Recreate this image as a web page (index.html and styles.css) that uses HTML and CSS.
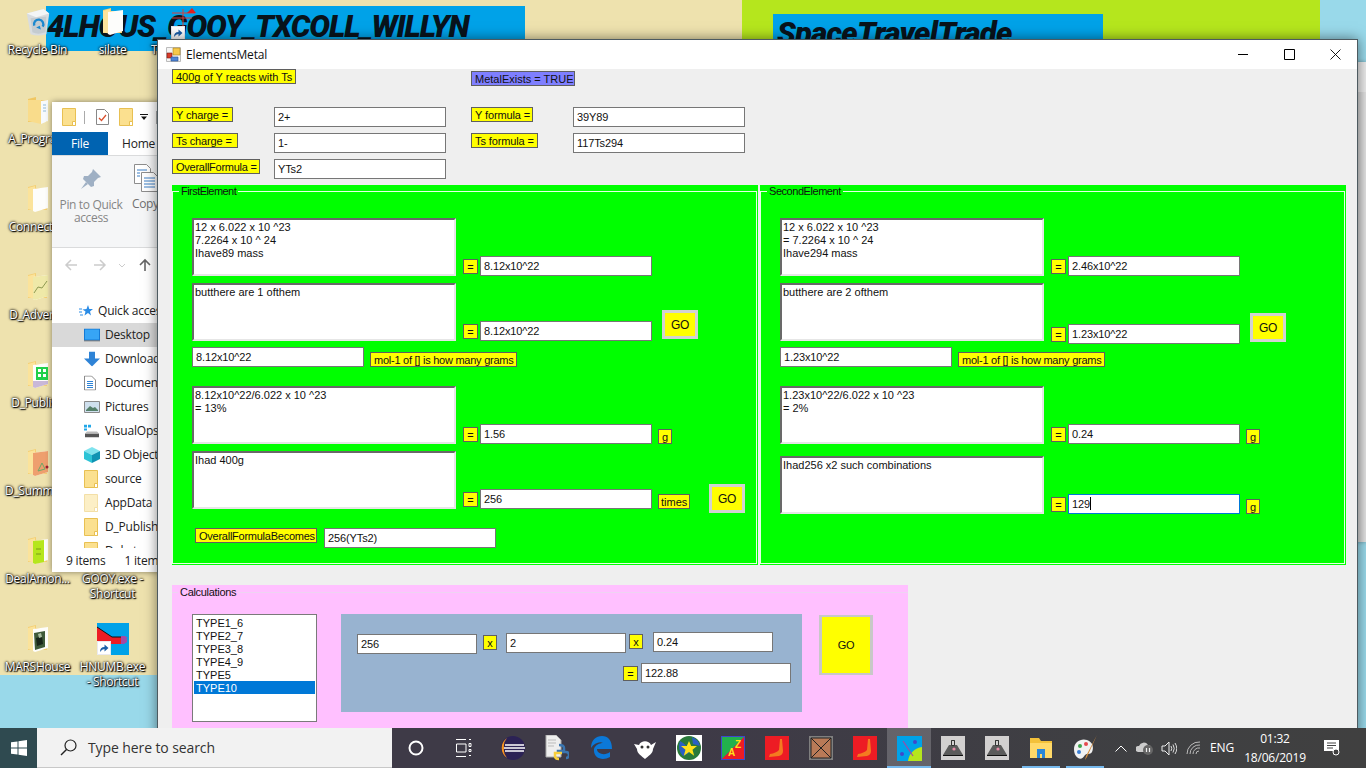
FILE: index.html
```html
<!DOCTYPE html>
<html lang="en">
<head>
<meta charset="utf-8">
<title>ElementsMetal</title>
<link rel="stylesheet" href="styles.css">
</head>
<body>
<svg class="defs" width="0" height="0" aria-hidden="true">
  <symbol id="dfolder" viewBox="0 0 22 28">
    <path d="M1 2 L9 0 L9 3 L20 3 L20 25 L1 25 Z" fill="#f4cf73"/>
    <path d="M1 3 L8 1 L8 26 L1 24 Z" fill="#fbe39b"/>
    <path d="M6 4 L21 2 L21 23 L8 27 L6 26 Z" fill="#fdfdfb"/>
  </symbol>
  <symbol id="dfolder2" viewBox="0 0 22 28">
    <path d="M1 2 L9 0 L9 3 L20 3 L20 25 L1 25 Z" fill="#f0c763"/>
    <path d="M1 3 L14 3 L14 27 L1 24 Z" fill="#f9dc8b"/>
    <path d="M14 4 L21 3 L21 24 L14 27 Z" fill="#f7fafc"/>
    <path d="M16 8h3M16 11h3M16 14h3" stroke="#8fb9d8"/>
  </symbol>
  <symbol id="sfolder" viewBox="0 0 14 18">
    <path d="M.5.5h13v17H.5z" fill="#fbe08f" stroke="#e8c052"/>
    <path d="M10.5 13.5h3v4h-3z" fill="#fff" stroke="#e8c052"/>
  </symbol>
  <symbol id="mount" viewBox="0 0 24 24">
    <path d="M0 0h24v24H0z" fill="#d2d0d0"/>
    <path d="M2 19 L8 9 L10 9 L10 4 L14 4 L14 9 L16 9 L22 19 Z" fill="#5b5b5b"/>
    <path d="M10.500 4.500h3v5h-3z" fill="#d2d0d0" stroke="#333"/>
    <path d="M2 19h20v1H2z" fill="#111"/>
    <circle cx="13" cy="13" r="1.600" fill="#e58aa8"/>
  </symbol>
  <symbol id="boot" viewBox="0 0 24 24">
    <path d="M0 0h24v24H0z" fill="#ed1c24"/>
    <path d="M15 3h2l1 12q0 4-4 5L4 21l1-3q6-1 9-4z" fill="#f47a20"/>
  </symbol>
  <symbol id="arrow" viewBox="0 0 14 14">
    <path d="M0 0h14v14H0z" fill="#e9e9ef"/>
    <path d="M1 13V1h12v12z" fill="#fff"/>
    <path d="M3 11 Q3 6 7.500 6 V3.500 L11.500 7 L7.500 10.500 V8 Q5 8 3 11Z" fill="#1c5fa8"/>
  </symbol>
</svg>

<div class="bg bg-tan"></div>
<div class="bg bg-blue-r"></div>
<div class="bg bg-blue-l"></div>
<div class="bg bg-banner1"><span class="banner-text">4LHOUS_GOOY_TXCOLL_WILLYN</span></div>
<div class="bg bg-lime"></div>
<div class="bg bg-banner2"><span class="banner-text banner-text2">SpaceTravelTrade</span></div>
<div class="bg bg-behind"><div class="behind-top"></div></div>

<div class="dicon c1 r0">
  <svg class="di" width="28" height="30" viewBox="0 0 28 30"><path d="M2 6 L20 1 L26 6 L23 28 Q14 31 6 28Z" fill="#d8dcdf"/><path d="M2 6 L20 1 L26 6 L12 10Z" fill="#f3f5f6"/><path d="M6 11 L23 9 L22 26 Q14 29 8 26Z" fill="#c4cbd0"/><path d="M10 19 a5 5 0 1 1 9 1" fill="none" stroke="#1b88cf" stroke-width="2.500"/><path d="M12 21 l5 2 -1-4z" fill="#1b88cf"/></svg>
  <span class="dl">Recycle Bin</span>
</div>
<div class="dicon c2 r0">
  <svg class="di" width="22" height="28"><use href="#dfolder"/></svg>
  <span class="dl">silate</span>
</div>
<svg class="tee-icon" width="26" height="32" viewBox="0 0 26 32"><path d="M1 5h23M1 10h20M12 1v18" stroke="#d5403f" stroke-width="1" fill="none"/><path d="M16 5 L21 0 L25 5Z" fill="#e0201f"/><use href="#arrow" x="0" y="18" width="14" height="14"/></svg>
<span class="dl dl-t">T</span>
<div class="dicon c1 r1">
  <svg class="di" width="22" height="28"><use href="#dfolder2"/></svg>
  <span class="dl">A_Program</span>
</div>
<div class="dicon c1 r2">
  <svg class="di" width="22" height="28"><use href="#dfolder"/></svg>
  <span class="dl">Connected</span>
</div>
<div class="dicon c1 r3">
  <svg class="di" width="22" height="28" viewBox="0 0 22 28"><use href="#dfolder" width="22" height="28"/><path d="M6 4 L21 2 V23 L8 27 L6 26Z" fill="#efe9a8"/><path d="M7 20 L11 14 L15 15 L20 8" fill="none" stroke="#8f9a52"/></svg>
  <span class="dl">D_Advertis</span>
</div>
<div class="dicon c1 r4">
  <svg class="di" width="22" height="28" viewBox="0 0 22 28"><use href="#dfolder" width="22" height="28"/><path d="M9 6h12v13H9z" fill="#21d04a"/><path d="M11 8h3v3h-3zm5 0h3v3h-3zm-5 5h3v3h-3zm5 0h3v3h-3z" fill="#fff"/><path d="M6 20h15v3l-13 4-2-1z" fill="#c9b8d8"/></svg>
  <span class="dl">D_Publish</span>
</div>
<div class="dicon c1 r5">
  <svg class="di" width="22" height="28" viewBox="0 0 22 28"><use href="#dfolder" width="22" height="28"/><path d="M6 4 L21 2 V23 L8 27 L6 26Z" fill="#ee9f6e"/><path d="M11 22 L15 14 L18 20 Z" fill="none" stroke="#6fa866"/><circle cx="20" cy="18" r="1.500" fill="#a01c2c"/></svg>
  <span class="dl">D_Summary</span>
</div>
<div class="dicon c1 r6">
  <svg class="di" width="22" height="28" viewBox="0 0 22 28"><use href="#dfolder" width="22" height="28"/><path d="M6 4 L17 3 V25 L8 27 L6 26Z" fill="#b5e61d"/><path d="M9 12h5M9 17h5" stroke="#7a9a1a"/></svg>
  <span class="dl">DealAmon...</span>
</div>
<div class="dicon c1 r7">
  <svg class="di" width="22" height="28" viewBox="0 0 22 28"><use href="#dfolder" width="22" height="28"/><path d="M7 8 L18 6 V22 L8 25Z" fill="#3f5a3a"/><path d="M9 13 L15 11 L16 19 L10 21Z" fill="#18261a"/><path d="M11 9 l3-1 1 4-3 1z" fill="#a9bda0"/></svg>
  <span class="dl">MARSHouse</span>
</div>
<div class="dicon c2 r6 two">
  <span class="dl dl-two">GOOY.exe -<br>Shortcut</span>
</div>
<div class="dicon c2 r7">
  <svg class="di hnumb" width="32" height="32" viewBox="0 0 32 32"><path d="M0 0h32v32H0z" fill="#00a2e8"/><path d="M0 4 L15 14 H24 V21 H14 L8 24 H0Z" fill="#ed1c24"/><path d="M0 4 L15 14 H24" fill="none" stroke="#111"/><path d="M24 13h4l3 2-3 1h2v3l-3 2h-3z" fill="#a349a4"/><use href="#arrow" x="0" y="18" width="14" height="14"/></svg>
  <span class="dl dl-two">HNUMB.exe<br>- Shortcut</span>
</div>

<section class="explorer">
  <div class="qat">
    <svg width="14" height="18"><use href="#sfolder"/></svg>
    <i class="qsep"></i>
    <svg class="q1" width="13" height="16" viewBox="0 0 13 16"><path d="M.5.5h8l4 4v11H.5z" fill="#fff" stroke="#888"/><path d="M3 9l2.500 2.500L10 6" fill="none" stroke="#d9502e" stroke-width="1.300"/></svg>
    <svg class="q2" width="14" height="18"><use href="#sfolder"/></svg>
    <svg class="q3" width="8" height="6" viewBox="0 0 8 6"><path d="M0 0h8v1H0zM1 2.500h6L4 6z" fill="#111"/></svg>
    <i class="qsep q4"></i>
  </div>
  <div class="tabs"><span class="tab-file">File</span><span class="tab-home">Home</span></div>
  <div class="ribbon">
    <div class="rb-pin">
      <svg width="22" height="22" viewBox="0 0 22 22"><path d="M13 1 L21 9 L18 10 L14 14 L14 18 L11 19 L3 11 L4 8 L8 8 L12 4Z" fill="#9fb0c4"/><path d="M6 14 L1 21 L8 16Z" fill="#9fb0c4"/></svg>
      <span>Pin to Quick access</span>
    </div>
    <div class="rb-copy">
      <svg width="24" height="28" viewBox="0 0 24 28"><path d="M.5.500h12l4 4v15H.5z" fill="#fff" stroke="#8d8d8d"/><path d="M7.500 8.500h12l4 4v15h-16z" fill="#fff" stroke="#8d8d8d"/><path d="M3 6h10M3 9h3M3 12h3M10 14h11M10 17h11M10 20h11M10 23h11" stroke="#3a7fc5"/></svg>
      <span>Copy</span>
    </div>
  </div>
  <div class="nav">
    <svg width="14" height="12" viewBox="0 0 14 12"><path d="M13 6H2M7 1 2 6l5 5" fill="none" stroke="#ccc" stroke-width="1.500"/></svg>
    <svg class="nv2" width="14" height="12" viewBox="0 0 14 12"><path d="M1 6h11M7 1l5 5-5 5" fill="none" stroke="#ccc" stroke-width="1.500"/></svg>
    <svg class="nv3" width="8" height="5" viewBox="0 0 8 5"><path d="M1 1l3 3 3-3" fill="none" stroke="#ccc"/></svg>
    <svg class="nv4" width="12" height="14" viewBox="0 0 12 14"><path d="M6 13V2M1 7l5-5 5 5" fill="none" stroke="#666" stroke-width="1.600"/></svg>
  </div>
  <div class="tree">
    <div class="qa">
      <svg width="14" height="13" viewBox="0 0 14 13"><path d="M9 0l1.300 4H14l-3 2.500 1 4L9 8l-3.500 2.500 1-4L3.500 4.500 7.500 4z" fill="#2b8ce6"/><path d="M0 4h3M0 7h3M1 10h3" stroke="#2b8ce6"/></svg>
      <span>Quick access</span>
    </div>
    <div class="ti sel"><svg width="16" height="13" viewBox="0 0 16 13"><path d="M0 0h16v12H0z" fill="#1479d4"/><path d="M1 1h14v10H1z" fill="#37a5f5"/><path d="M0 12h16v1H0z" fill="#555"/></svg><span>Desktop</span></div>
    <div class="ti"><svg width="16" height="15" viewBox="0 0 16 15"><path d="M5 0h6v7h5L8 15 0 7h5z" fill="#2e83d6"/></svg><span>Downloads</span></div>
    <div class="ti"><svg width="12" height="15" viewBox="0 0 12 15"><path d="M.5.500h7l4 4v10H.5z" fill="#fff" stroke="#8a8a8a"/><path d="M3 6h6M3 8h6M3 10h6M3 12h6" stroke="#2e83d6"/></svg><span>Documents</span></div>
    <div class="ti"><svg width="16" height="12" viewBox="0 0 16 12"><path d="M.5.500h15v11H.5z" fill="#cfe0ee" stroke="#8a8a8a"/><path d="M2 9l4-4 3 2 2-1 3 3v1H2z" fill="#55806a"/></svg><span>Pictures</span></div>
    <div class="ti"><svg width="16" height="13" viewBox="0 0 16 13"><path d="M1 9h14v4H1z" fill="#555"/><path d="M3 7h10l2 2H1z" fill="#bbb"/><path d="M0 0h3v3H0zm4 0h3v3H4zM0 4h3v2H0z" fill="#22a7e8"/></svg><span>VisualOps</span></div>
    <div class="ti"><svg width="16" height="16" viewBox="0 0 16 16"><path d="M8 0l8 4-8 4-8-4z" fill="#7fe3ee"/><path d="M0 4l8 4v8l-8-4z" fill="#2cc3d6"/><path d="M16 4l-8 4v8l8-4z" fill="#0f93b3"/></svg><span>3D Objects</span></div>
    <div class="ti"><svg width="14" height="18"><use href="#sfolder"/></svg><span>source</span></div>
    <div class="ti faded"><svg width="14" height="18"><use href="#sfolder"/></svg><span>AppData</span></div>
    <div class="ti"><svg width="14" height="18"><use href="#sfolder"/></svg><span>D_Publish</span></div>
    <div class="ti"><svg width="14" height="18"><use href="#sfolder"/></svg><span>Dokat</span></div>
  </div>
  <div class="status"><span>9 items</span><span class="st2">1 item</span></div>
</section>

<main class="form">
  <header class="titlebar">
    <svg class="appicon" width="15" height="15" viewBox="0 0 15 15"><path d="M.5.5h14v14H.5z" fill="#f4f4f4" stroke="#bbb"/><path d="M7 1h7v7H7z" fill="#f6c84a" stroke="#a87f1a" stroke-width=".6"/><path d="M1 6h5v5H1z" fill="#d83b2a" stroke="#7a1a12" stroke-width=".6"/><path d="M5 10h7v4H5z" fill="#4f86d9" stroke="#274f8f" stroke-width=".6"/></svg>
    <h1 class="title">ElementsMetal</h1>
    <div class="wbtn"><svg width="11" height="11" viewBox="0 0 11 11"><path d="M0 5.500h10" stroke="#000"/></svg></div>
    <div class="wbtn"><svg width="11" height="11" viewBox="0 0 11 11"><path d="M.5.500h10v10H.5z" fill="none" stroke="#000"/></svg></div>
    <div class="wbtn"><svg width="11" height="11" viewBox="0 0 11 11"><path d="M.5.500l10 10M10.500.500l-10 10" fill="none" stroke="#000" stroke-width=".9"/></svg></div>
  </header>
  <div class="client">
    <div class="head">
      <div class="lbl w124">400g of Y reacts with Ts</div><div></div>
      <div class="lbl lbl-metal w104 top2">MetalExists = TRUE</div><div></div>
      <div class="lbl w61 tight1">Y charge =</div><div class="inp">2+</div>
      <div class="lbl w62 tight1">Y formula =</div><div class="inp">39Y89</div>
      <div class="lbl w66 tight1">Ts charge =</div><div class="inp">1-</div>
      <div class="lbl w67 tight1">Ts formula =</div><div class="inp">117Ts294</div>
      <div class="lbl w88 tight2">OverallFormula =</div><div class="inp">YTs2</div>
    </div>

    <div class="groups">
      <section class="group">
        <div class="frame">
          <h2 class="legend">FirstElement</h2>
          <div class="row">
            <div class="ta">12 x 6.022 x 10 ^23<br>7.2264 x 10 ^ 24<br>Ihave89 mass</div>
            <div class="lbl eq">=</div><div class="inp">8.12x10^22</div>
          </div>
          <div class="row mt7">
            <div class="ta">butthere are 1 ofthem</div>
            <div class="lbl eq">=</div><div class="inp">8.12x10^22</div>
            <div class="go go-a">GO</div>
          </div>
          <div class="row mt6">
            <div class="inp">8.12x10^22</div>
            <div class="lbl w147 ml6 tight2">mol-1 of [] is how many grams</div>
          </div>
          <div class="row mt19">
            <div class="ta">8.12x10^22/6.022 x 10 ^23<br>= 13%</div>
            <div class="lbl eq">=</div><div class="inp">1.56</div>
            <div class="lbl w14 ml6">g</div>
          </div>
          <div class="row mt7">
            <div class="ta">Ihad 400g</div>
            <div class="lbl eq">=</div><div class="inp">256</div>
            <div class="lbl w32 ml6">times</div>
            <div class="go go-b">GO</div>
          </div>
          <div class="row row-top mt19">
            <div class="lbl w122 ml3 tight2">OverallFormulaBecomes</div>
            <div class="inp ml7">256(YTs2)</div>
          </div>
        </div>
      </section>

      <section class="group">
        <div class="frame">
          <h2 class="legend legend-2">SecondElement</h2>
          <div class="row">
            <div class="ta">12 x 6.022 x 10 ^23<br>= 7.2264 x 10 ^ 24<br>Ihave294 mass</div>
            <div class="lbl eq">=</div><div class="inp">2.46x10^22</div>
          </div>
          <div class="row mt7">
            <div class="ta ta-up3">butthere are 2 ofthem</div>
            <div class="lbl eq">=</div><div class="inp">1.23x10^22</div>
            <div class="go go-a">GO</div>
          </div>
          <div class="row mt3">
            <div class="inp">1.23x10^22</div>
            <div class="lbl w147 ml6 tight2">mol-1 of [] is how many grams</div>
          </div>
          <div class="row mt19">
            <div class="ta">1.23x10^22/6.022 x 10 ^23<br>= 2%</div>
            <div class="lbl eq">=</div><div class="inp">0.24</div>
            <div class="lbl w14 ml6">g</div>
          </div>
          <div class="row mt12">
            <div class="ta">Ihad256 x2 such combinations</div>
            <div class="lbl eq">=</div><div class="inp inp-focus">129<i class="caret"></i></div>
            <div class="lbl w14 ml6">g</div>
          </div>
        </div>
      </section>
    </div>

    <section class="calc">
      <h2 class="legend legend-calc">Calculations</h2>
      <div class="calc-body">
        <ul class="list">
          <li>TYPE1_6</li><li>TYPE2_7</li><li>TYPE3_8</li><li>TYPE4_9</li><li>TYPE5</li><li class="on">TYPE10</li>
        </ul>
        <div class="steel">
          <div class="steel-a">
            <div class="inp w120 top2">256</div>
            <div class="lbl w14 top3 ml6">x</div>
            <div class="inp w120 top1 ml9">2</div>
            <div class="lbl w14 top2 ml3">x</div>
            <div class="inp w120 ml10">0.24</div>
          </div>
          <div class="steel-b">
            <div class="lbl w15 top3">=</div>
            <div class="inp w150 ml3">122.88</div>
          </div>
        </div>
        <div class="go go-big">GO</div>
      </div>
    </section>
  </div>
</main>

<footer class="taskbar">
  <div class="start"><svg width="16" height="16" viewBox="0 0 16 16"><path d="M0 2.300 6.500 1.400V7.500H0zM7.500 1.300 16 0V7.500H7.500zM0 8.500H6.500V14.600L0 13.700zM7.500 8.500H16V16L7.500 14.700z" fill="#fff"/></svg></div>
  <div class="search">
    <svg width="17" height="17" viewBox="0 0 17 17"><circle cx="10.500" cy="6.500" r="5.500" fill="none" stroke="#222" stroke-width="1.200"/><path d="M6.500 10.500L1 16" stroke="#222" stroke-width="1.400"/></svg>
    <span>Type here to search</span>
  </div>
  <div class="tb tb48"><svg width="16" height="16" viewBox="0 0 16 16"><circle cx="8" cy="8" r="6.500" fill="none" stroke="#fff" stroke-width="2"/></svg></div>
  <div class="tb tb48"><svg width="16" height="18" viewBox="0 0 16 18"><path d="M0 .5h10M0 17.500h10M.5 5h9.500v8H.5zM13 .5h2M13 4.500h2v3h-2zM13 10.500h2v2h-2zM13 16.500h2" fill="none" stroke="#fff"/></svg></div>
  <div class="tb tb-first"><svg width="24" height="24" viewBox="0 0 24 24"><circle cx="12" cy="12" r="12" fill="#2c2255"/><path d="M6 2A12 12 0 0 0 6 22 12 12 0 0 1 3 12 12 12 0 0 1 6 2z" fill="#f7941e"/><path d="M4 9h19M3 12h21M4 15h19" stroke="#fff" stroke-width="1.300"/></svg></div>
  <div class="tb"><svg width="24" height="26" viewBox="0 0 24 26"><path d="M1 0h10l5 5v17H1z" fill="#eee" stroke="#aaa"/><path d="M3 5h8M3 8h8M3 11h6" stroke="#bbb"/><path d="M14 10q5 0 5 3v3h-6v1h8q3 0 3 3 0 3-3 3" fill="none" stroke="#3a75b0" stroke-width="2.500"/><path d="M14 24q-4 0-4-3v-3h7" fill="none" stroke="#f7cf3d" stroke-width="2.500"/></svg></div>
  <div class="tb"><svg width="22" height="24" viewBox="0 0 22 24"><path d="M1 12C1 4 6 0 12 0c6 0 10 4 10 13H7c0 5 8 7 13 3v5c-7 4-17 2-16-8 1-4 6-6 9-6-3-2-9 0-12 5z" fill="#0b78d7"/></svg></div>
  <div class="tb"><svg width="22" height="22" viewBox="0 0 22 22"><path d="M0 7 5 8C7 3 15 3 17 8L22 5 19 12C19 17 14 19 11 22 8 19 3 17 3 12Z" fill="#fff"/><circle cx="8" cy="10" r="1.500" fill="#333"/><circle cx="14" cy="10" r="1.500" fill="#333"/></svg></div>
  <div class="tb"><svg width="26" height="26" viewBox="0 0 26 26"><path d="M0 0h26v26H0z" fill="#fff"/><circle cx="13" cy="13" r="12" fill="#2a7a3a"/><path d="M4 6q8 4 9 12l-6 3q-6-6-3-15zM16 2q7 3 8 9l-7-2z" fill="#2a5fc4"/><path d="M13 6l2.200 5H21l-4.500 3.700 1.700 6L13 17l-5.200 3.700 1.700-6L5 11h5.800z" fill="#ffe11a"/></svg></div>
  <div class="tb"><svg width="24" height="24" viewBox="0 0 24 24"><path d="M0 0h24v24H0z" fill="#3f48cc"/><path d="M1 1h22L1 23z" fill="#22b14c"/><path d="M23 1v22H1z" fill="#ed1c24"/><text x="7" y="20" class="az">A</text><text x="14" y="12" class="az">Z</text></svg></div>
  <div class="tb"><svg width="24" height="24"><use href="#boot"/></svg></div>
  <div class="tb"><svg width="24" height="24" viewBox="0 0 24 24"><path d="M0 0h24v24H0z" fill="#7f7f7f"/><path d="M2 2h20v20H2z" fill="#b97a57" stroke="#222"/><path d="M2 2l20 20M22 2L2 22" stroke="#222"/></svg></div>
  <div class="tb"><svg width="24" height="24"><use href="#boot"/></svg></div>
  <div class="tb tb-active"><svg width="25" height="25" viewBox="0 0 25 25"><path d="M0 0h25v25H0z" fill="#00a2e8"/><path d="M11 25C12 17 18 12 25 11v14z" fill="#b5e61d"/><path d="M6 5l10 15" stroke="#a349a4" stroke-width="1.200"/><circle cx="18" cy="6" r="2" fill="#3f48cc"/><circle cx="5" cy="18" r="2" fill="#3f48cc"/></svg></div>
  <div class="tb"><svg width="24" height="24"><use href="#mount"/></svg></div>
  <div class="tb"><svg width="24" height="24"><use href="#mount"/></svg></div>
  <div class="tb tb-run"><svg width="22" height="20" viewBox="0 0 22 20"><path d="M0 0h9l2 3h11v17H0z" fill="#f3c13a"/><path d="M0 5h22v15H0z" fill="#ffd969"/><path d="M7 11h8v9h-3v-4h-2v4H7z" fill="#2a86d6"/></svg></div>
  <div class="tb tb-run"><svg width="25" height="26" viewBox="0 0 25 26"><path d="M1 14C1 7 8 3 14 5c6 2 7 8 5 12-2 3-5 1-7 3-2 3-4 5-7 3-3-2-4-5-4-9z" fill="#f1f1f1"/><circle cx="7" cy="11" r="2" fill="#3fa34d"/><circle cx="13" cy="9" r="2" fill="#e5484d"/><circle cx="6" cy="17" r="2" fill="#3a7fd5"/><path d="M24 0l-10 22-2 3 1-4z" fill="#d38b3a"/></svg></div>
  <div class="tray">
    <div class="tr tr24"><svg width="12" height="7" viewBox="0 0 12 7"><path d="M.5 6.500L6 1l5.500 5.500" fill="none" stroke="#fff"/></svg></div>
    <div class="tr tr24"><svg width="18" height="14" viewBox="0 0 18 14"><path d="M2 11a3 3 0 0 1 1-6 5 5 0 0 1 9-1 3 3 0 0 1 3 3H8v4z" fill="#ccc"/><circle cx="12" cy="9" r="5" fill="#666"/><path d="M10.500 7v4M13.500 7v4" stroke="#eee" stroke-width="1.200"/></svg></div>
    <div class="tr tr24"><svg width="16" height="15" viewBox="0 0 16 15"><path d="M1 5h3l4-4v13l-4-4H1z" fill="none" stroke="#eee"/><path d="M10 5q1.500 2.500 0 5M12 3.500q2.500 4 0 8M14 2q3.500 5.500 0 11" fill="none" stroke="#eee" stroke-width=".9"/></svg></div>
    <div class="tr tr26"><svg width="16" height="14" viewBox="0 0 16 14"><path d="M1 13A12 12 0 0 1 14 1M4 13A9 9 0 0 1 14 4M7 13A6 6 0 0 1 14 7M10 13a3 3 0 0 1 3-3" fill="none" stroke="#bbb"/></svg></div>
    <div class="tr tr30 tray-t">ENG</div>
    <div class="clock"><span>01:32</span><span>18/06/2019</span></div>
    <div class="tr note"><svg width="16" height="16" viewBox="0 0 16 16"><path d="M0 0h15v11h-4l-2 4v-4H0z" fill="#fff"/><path d="M3 3h9M3 5.500h9M3 8h6" stroke="#444"/><circle cx="12" cy="12" r="3" fill="#404040" stroke="#fff"/></svg></div>
  </div>
</footer>
</body>
</html>
```
FILE: styles.css
```css
* { box-sizing: border-box; }
html, body { margin: 0; padding: 0; }
body {
  position: relative;
  width: 1366px;
  height: 768px;
  overflow: hidden;
  background: #eee2ae;
  font-family: "Liberation Sans", Arial, sans-serif;
  font-size: 11px;
  color: #111;
}
.defs { position: absolute; }
h1, h2, ul { margin: 0; padding: 0; font: inherit; }

/* wallpaper pieces, free canvas */
.bg { position: absolute; overflow: hidden; }
.bg-tan { left: 0; top: 0; width: 1366px; height: 728px; background: #eee2ae; }
.bg-blue-r { left: 1320px; top: 0; width: 46px; height: 728px; background: #99d9ea; }
.bg-blue-l { left: 0; top: 675px; width: 160px; height: 53px; background: #99d9ea; }
.bg-banner1 { left: 46px; top: 6px; width: 479px; height: 45px; background: #00a2e8; }
.bg-lime { left: 742px; top: 0; width: 578px; height: 60px; background: #b5e61d; }
.bg-banner2 { left: 773px; top: 14px; width: 330px; height: 40px; background: #00a2e8; }
.bg-behind { left: 1350px; top: 62px; width: 16px; height: 480px; background: linear-gradient(90deg, #c4c4c4, #d4d4d4 50%, #e4e4e4); box-shadow: 0 0 4px rgba(0,0,0,.3); }
.behind-top { height: 30px; background: #ececec; }
.banner-text {
  display: block;
  padding: 3px 0 0 1px;
  font: italic 900 31px/36px Roboto, "Liberation Sans", sans-serif;
  letter-spacing: -1.1px;
  color: #08131c;
  white-space: nowrap;
}
.banner-text2 { padding: 2px 0 0 4px; font-size: 31px; letter-spacing: -.75px; }

/* desktop icons */
.dicon {
  position: absolute;
  width: 75px;
  display: flex;
  flex-direction: column;
  align-items: center;
}
.c1 { left: 0; }
.c2 { left: 75px; }
.r0 { top: 8px; }
.r1 { top: 97px; }
.r2 { top: 185px; }
.r3 { top: 273px; }
.r4 { top: 361px; }
.r5 { top: 449px; }
.r6 { top: 537px; }
.r7 { top: 625px; }
.di { display: block; height: 28px; margin-bottom: 6px; }
.hnumb { height: 32px; margin: -2px 0 4px; }
.two { padding-top: 34px; }
.dl {
  font: 12px/15px "Open Sans", sans-serif;
  letter-spacing: -.3px;
  color: #fff;
  text-align: center;
  white-space: nowrap;
  text-shadow: 0 0 2px #000, 1px 1px 1px #000, 0 0 3px #000;
}
.dl-two { white-space: normal; width: 72px; }
.dl-t { position: absolute; left: 151px; top: 42px; }
.tee-icon { position: absolute; left: 171px; top: 8px; }

/* file explorer behind the form */
.explorer {
  position: absolute;
  left: 52px;
  top: 102px;
  width: 300px;
  height: 470px;
  background: #fff;
  box-shadow: 0 0 6px rgba(0,0,0,.45);
  display: flex;
  flex-direction: column;
  font: 12px/16px "Open Sans", sans-serif;
  letter-spacing: -.2px;
  color: #222;
}
.qat { height: 30px; display: flex; align-items: center; padding-left: 10px; flex: none; }
.qsep { width: 1px; height: 13px; background: #aaa; margin-left: 8px; }
.q1 { margin-left: 11px; }
.q2 { margin-left: 10px; }
.q3 { margin-left: 7px; }
.q4 { margin-left: 8px; }
.tabs { height: 24px; display: flex; flex: none; align-items: stretch; border-bottom: 1px solid #dadbdc; }
.tab-file { width: 56px; background: #0063b1; color: #fff; display: flex; align-items: center; justify-content: center; }
.tab-home { padding-left: 14px; display: flex; align-items: center; }
.ribbon { height: 92px; flex: none; background: #f5f6f7; border-bottom: 1px solid #dadbdc; display: flex; font-size: 12px; line-height: 13px; letter-spacing: -.35px; color: #707070; }
.rb-pin { width: 70px; margin-left: 4px; display: flex; flex-direction: column; align-items: center; text-align: center; padding-top: 12px; color: #868686; }
.rb-pin svg { margin-bottom: 8px; }
.rb-copy { display: flex; flex-direction: column; align-items: flex-start; padding: 8px 0 0 6px; }
.rb-copy svg { margin: 0 0 5px 2px; }
.nav { height: 34px; flex: none; display: flex; align-items: center; padding: 0 0 0 12px; }
.nv2 { margin-left: 15px; }
.nv3 { margin-left: 11px; }
.nv4 { margin-left: 13px; }
.tree { flex: 1; overflow: hidden; padding-top: 23px; }
.qa { height: 24px; display: flex; align-items: center; gap: 5px; padding-left: 27px; margin-top: -6px; font-size: 12px; }
.ti { height: 24px; display: flex; align-items: center; padding-left: 32px; position: relative; }
.ti svg { position: absolute; left: 32px; top: 50%; transform: translateY(-50%); }
.ti span { margin-left: 21px; }
.sel { background: #d9d9d9; }
.faded svg { opacity: .5; }
.status { height: 24px; flex: none; display: flex; align-items: center; padding: 2px 0 0 14px; background: #fff; }
.st2 { margin-left: 19px; }

/* the form */
.form {
  position: absolute;
  left: 157px;
  top: 39px;
  width: 1201px;
  height: 700px;
  background: #efefef;
  border: 1px solid #4d5a60;
  border-bottom: 0;
  box-shadow: 0 0 12px rgba(0,0,0,.5);
  display: flex;
  flex-direction: column;
  overflow: hidden;
}
.titlebar { height: 29px; flex: none; background: #fff; display: flex; align-items: center; padding-left: 8px; margin-right: -1px; }
.appicon { flex: none; }
.title { font: 12px/16px "Open Sans", sans-serif; letter-spacing: -.15px; color: #111; margin-left: 5px; flex: 1; }
.wbtn { width: 46px; height: 29px; display: flex; align-items: center; justify-content: center; }
.client { flex: 1; padding-left: 14px; min-height: 0; }

.head {
  display: grid;
  grid-template-columns: 102px 197px 102px 172px;
  grid-template-rows: 32px 20px 20px 20px;
  row-gap: 6px;
}
.head .lbl { align-self: start; }

.lbl {
  height: 15px;
  background: #ff0;
  border: 1px solid #5f5f5f;
  padding: 0 2px 0 3px;
  line-height: 14px;
  white-space: nowrap;
  overflow: hidden;
  flex: none;
}
.lbl-metal { background: #7f7fff; }
.tight1 { letter-spacing: -.12px; }
.tight2 { letter-spacing: -.25px; }
.eq { width: 15px; margin: 0 2px 2px 0; text-align: center; padding: 0; }
.w14 { width: 14px; text-align: center; padding: 0; }
.w15 { width: 15px; text-align: center; padding: 0; }
.w32 { width: 32px; padding-left: 2px; }
.w61 { width: 61px; }
.w62 { width: 62px; }
.w66 { width: 66px; }
.w67 { width: 67px; }
.w88 { width: 88px; }
.w104 { width: 104px; }
.w122 { width: 122px; }
.w124 { width: 124px; }
.w147 { width: 147px; }

.inp {
  width: 172px;
  height: 20px;
  background: #fff;
  border: 1px solid #767676;
  padding: 0 3px;
  line-height: 18px;
  letter-spacing: -.12px;
  white-space: nowrap;
  flex: none;
}
.w120 { width: 120px; }
.w150 { width: 150px; }
.inp-focus { border-color: #0078d7; }
.caret { display: inline-block; width: 1px; height: 13px; background: #000; vertical-align: -2px; }

.top1 { margin-top: 1px; }
.top2 { margin-top: 2px; }
.top3 { margin-top: 3px; }
.ml3 { margin-left: 3px; }
.ml6 { margin-left: 6px; }
.ml7 { margin-left: 7px; }
.ml9 { margin-left: 9px; }
.ml10 { margin-left: 10px; }
.mt3 { margin-top: 3px; }
.mt6 { margin-top: 6px; }
.mt7 { margin-top: 7px; }
.mt12 { margin-top: 12px; }
.mt19 { margin-top: 19px; }

.groups { display: flex; gap: 2px; margin-top: 6px; }
.group { width: 586px; height: 380px; background: #0f0; padding: 6px 1px 1px 0; }
.frame {
  position: relative;
  height: 373px;
  border: 1px solid #e6ffe6;
  padding: 26px 0 0 19px;
}
.legend {
  position: absolute;
  left: 6px;
  top: -7px;
  height: 13px;
  line-height: 13px;
  padding: 0 2px;
  background: #0f0;
  font-weight: normal;
  letter-spacing: -.55px;
}
.legend-2 { letter-spacing: -.45px; }
.row { display: flex; align-items: flex-end; }
.row-top { align-items: flex-start; }
.ta {
  width: 264px;
  height: 58px;
  flex: none;
  background: #fff;
  border: 2px solid;
  border-color: #696969 #e6e6e6 #e6e6e6 #696969;
  padding: 1px 1px;
  line-height: 13px;
  margin-right: 7px;
}
.ta-up3 { margin-bottom: 3px; }
.go {
  flex: none;
  background: #ff0;
  border: 3px solid #d2d2d2;
  display: flex;
  align-items: center;
  justify-content: center;
  font-size: 12px;
  letter-spacing: -.3px;
}
.go-a { width: 36px; height: 29px; margin: 0 0 2px 10px; }
.go-b { width: 36px; height: 29px; margin: 0 0 -4px 19px; }
.go-big { width: 54px; height: 60px; margin: 1px 0 0 17px; font-size: 11px; border-color: #c8c8c8; border-width: 2px 3px; }

.calc {
  position: relative;
  width: 736px;
  height: 200px;
  margin-top: 20px;
  background: #ffc0ff;
  padding-top: 7px;
}
.legend-calc { background: #ffc0ff; left: 6px; top: 1px; height: 13px; letter-spacing: -.3px; }
.calc-body { display: flex; align-items: flex-start; border-top: 1px solid #eed3f2; padding: 21px 0 0 20px; }
.list {
  list-style: none;
  width: 125px;
  height: 108px;
  flex: none;
  background: #fff;
  border: 1px solid #7a7a7a;
  padding: 1px;
  line-height: 14px;
}
.list li { padding-left: 2px; height: 13px; }
.list .on { background: #0078d7; color: #fff; }
.steel {
  width: 461px;
  height: 98px;
  flex: none;
  margin-left: 24px;
  background: #98b3d0;
  padding: 18px 0 0 16px;
  display: flex;
  flex-direction: column;
}
.steel-a { display: flex; align-items: flex-start; height: 31px; }
.steel-b { display: flex; align-items: flex-start; justify-content: flex-end; padding-right: 11px; }

/* taskbar */
.taskbar {
  position: absolute;
  left: 0;
  top: 728px;
  width: 1366px;
  height: 40px;
  display: flex;
  align-items: stretch;
  background: linear-gradient(90deg, #3e3a47 0, #3e3a47 50%, #3f4042 85%, #404040 100%);
  color: #fff;
}
.start { width: 37px; flex: none; background: #2f4a50; display: flex; align-items: center; justify-content: center; }
.search {
  width: 355px;
  flex: none;
  background: #f2f2f2;
  border-bottom: 1px solid #c8c8c8;
  display: flex;
  align-items: center;
  gap: 11px;
  padding-left: 23px;
  font: 14px/20px "Open Sans", sans-serif;
  letter-spacing: -.1px;
  color: #333;
}
.tb { width: 44px; flex: none; display: flex; align-items: center; justify-content: center; position: relative; }
.tb48 { width: 48px; }
.tb-first { margin-left: 3px; }
.tb-active { background: rgba(255,255,255,.2); }
.tb-active::after, .tb-run::after {
  content: "";
  position: absolute;
  bottom: 0;
  height: 2px;
  background: #76b9ed;
}
.tb-active::after { left: 0; right: 0; }
.tb-run::after { left: 3px; right: 3px; }
.az { font: bold 10px "Liberation Sans", sans-serif; fill: #ffe11a; }
.tray { margin-left: auto; display: flex; align-items: stretch; padding-right: 14px; font: 12px/16px "Open Sans", sans-serif; letter-spacing: -.2px; }
.tr { display: flex; align-items: center; justify-content: center; flex: none; }
.tr24 { width: 24px; }
.tr26 { width: 26px; }
.tr30 { width: 30px; }
.clock { width: 72px; margin-left: 2px; flex: none; display: flex; flex-direction: column; align-items: center; justify-content: center; gap: 3px; }
.note { width: 40px; margin-left: 1px; }
```
